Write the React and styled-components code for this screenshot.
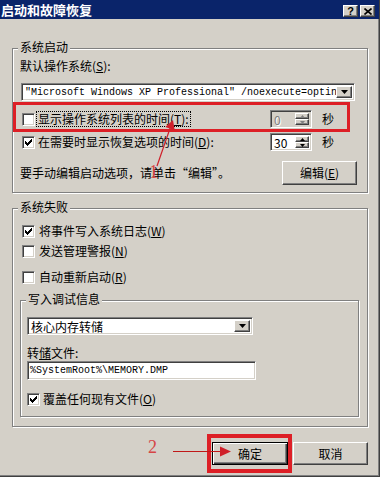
import React from "react";
import styled, { createGlobalStyle, css } from "styled-components";

const FACE = "#d4d0c8";
const SANS = `"Noto Sans CJK SC", "Noto Sans", sans-serif`;
const MONO = `"Liberation Mono", "Noto Sans CJK SC", monospace`;
const RED = "#dd1f26";

const Global = createGlobalStyle`
  html, body { margin: 0; padding: 0; background: ${FACE}; }
  body { font-family: ${SANS}; font-size: 12px; line-height: 14px; color: #000; }
  * { box-sizing: border-box; }
`;

const raised = css`
  background: ${FACE};
  border: 1px solid;
  border-color: #fff #404040 #404040 #fff;
  box-shadow: inset -1px -1px #808080;
`;

const sunken = css`
  border: 1px solid;
  border-color: #808080 #fff #fff #808080;
  box-shadow: inset 1px 1px #404040, inset -1px -1px ${FACE};
`;

const Window = styled.div`
  position: relative;
  width: 380px;
  height: 477px;
  background: ${FACE};
  border-right: 1px solid #404040;
  border-bottom: 1px solid #404040;
  box-shadow: inset -1px -1px #808080;
  display: flex;
  flex-direction: column;
  overflow: hidden;
`;

const TitleBar = styled.div`
  height: 19px;
  background: #0a246a;
  display: flex;
  align-items: flex-start;
  padding: 0 4px 0 1px;
`;

const TitleText = styled.div`
  color: #fff;
  font-weight: bold;
  font-size: 13px;
  line-height: 19px;
  flex: 1;
`;

const CaptionButton = styled.div`
  ${raised};
  width: 15px;
  height: 12px;
  margin-top: 5px;
  margin-left: ${(p) => p.$gap || 0}px;
  display: flex;
  align-items: center;
  justify-content: center;
  font-family: "Liberation Sans", sans-serif;
  font-weight: bold;
  font-size: 11px;
  line-height: 10px;
`;

const Body = styled.div`
  display: flex;
  flex-direction: column;
  padding: 0 11px 0 12px;
`;

const Group = styled.div`
  position: relative;
  border: 1px solid #808080;
  box-shadow: inset 1px 1px #fff, 1px 1px #fff;
  margin-top: ${(p) => p.$mt}px;
  margin-right: ${(p) => p.$mr || 0}px;
  padding: ${(p) => p.$pad};
  display: flex;
  flex-direction: column;
`;

const GroupTitle = styled.div`
  position: absolute;
  top: -9px;
  left: 5px;
  padding: 0 2px;
  background: ${FACE};
  line-height: 14px;
`;

const Label = styled.div`
  line-height: 14px;
  margin-top: ${(p) => p.$mt || 0}px;
  white-space: nowrap;
`;

const Combo = styled.div`
  ${sunken};
  background: #fff;
  width: ${(p) => p.$w}px;
  height: 18px;
  margin-top: ${(p) => p.$mt}px;
  margin-left: ${(p) => p.$ml || 0}px;
  display: flex;
  align-items: stretch;
  padding: 2px;
`;

const ComboText = styled.div`
  flex: 1;
  min-width: 0;
  white-space: nowrap;
  padding-left: 1px;
  line-height: 14px;
  ${(p) =>
    p.$mono
      ? css`
          overflow: hidden;
          font-family: ${MONO};
          font-size: 10px;
        `
      : css`
          font-family: ${SANS};
          font-size: 12px;
        `}
`;

const DropButton = styled.div`
  ${raised};
  width: 16px;
  flex: none;
  display: flex;
  align-items: center;
  justify-content: center;
`;

const TextField = styled.div`
  ${sunken};
  background: #fff;
  width: ${(p) => p.$w}px;
  height: 19px;
  margin-top: ${(p) => p.$mt}px;
  padding: 2px 0 0 2px;
  font-family: ${MONO};
  font-size: 10px;
  line-height: 14px;
  white-space: nowrap;
`;

const SpinGrid = styled.div`
  display: grid;
  grid-template-columns: 1fr 42px 12px;
  column-gap: 10px;
  align-items: center;
  margin-right: 33px;
  margin-top: ${(p) => p.$mt}px;
  height: 18px;
`;

const CheckRow = styled.div`
  display: flex;
  align-items: center;
  height: 16px;
  margin-top: ${(p) => p.$mt || 0}px;
  margin-left: ${(p) => p.$ml || 0}px;
`;

const Box = styled.div`
  ${sunken};
  background: #fff;
  width: 13px;
  height: 13px;
  flex: none;
  padding: 2px;
  display: flex;
  align-items: center;
  justify-content: center;
`;

const CheckLabel = styled.span`
  margin-left: ${(p) => p.$gap || 3}px;
  padding: 0 1px;
  line-height: 14px;
  white-space: nowrap;
  outline: ${(p) => (p.$focus ? "1px dotted #000" : "none")};
`;

const Spin = styled.div`
  ${sunken};
  background: ${(p) => (p.$disabled ? FACE : "#fff")};
  height: 18px;
  display: flex;
  padding: 2px;
`;

const SpinValue = styled.div`
  flex: 1;
  padding-left: 1px;
  line-height: 14px;
  color: ${(p) => (p.$disabled ? "#808080" : "#000")};
  text-shadow: ${(p) => (p.$disabled ? "1px 1px #fff" : "none")};
`;

const SpinArrows = styled.div`
  display: flex;
  flex-direction: column;
  width: 14px;
`;

const SpinArrow = styled.div`
  ${raised};
  flex: 1;
  display: flex;
  align-items: center;
  justify-content: center;
`;

const HintRow = styled.div`
  display: flex;
  align-items: center;
  justify-content: space-between;
  margin-top: 10px;
  padding-right: 10px;
`;

const PushButton = styled.button`
  ${raised};
  font-family: ${SANS};
  font-size: 12px;
  line-height: 14px;
  color: #000;
  width: ${(p) => p.$w}px;
  height: ${(p) => p.$h}px;
  padding: 0;
  ${(p) =>
    p.$default &&
    css`
      border: 1px solid #000;
      box-shadow: inset 1px 1px #fff, inset -1px -1px #404040, inset -2px -2px #808080;
    `}
`;

const ButtonRow = styled.div`
  display: flex;
  justify-content: flex-end;
  gap: 5px;
  margin-top: 15px;
`;

const RedFrame = styled.div`
  position: absolute;
  left: ${(p) => p.$x}px;
  top: ${(p) => p.$y}px;
  width: ${(p) => p.$w}px;
  height: ${(p) => p.$h}px;
  border: ${(p) => p.$t}px solid ${RED};
  pointer-events: none;
`;

const Marker = styled.div`
  position: absolute;
  left: ${(p) => p.$x}px;
  top: ${(p) => p.$y}px;
  font-family: "Liberation Serif", serif;
  font-size: 18px;
  line-height: 18px;
  color: #d64545;
`;

const Overlay = styled.svg`
  position: absolute;
  left: 0;
  top: 0;
  pointer-events: none;
`;

const Down = () => (
  <svg width="7" height="4" viewBox="0 0 7 4">
    <path d="M0 0h7L3.5 4z" fill="#000" />
  </svg>
);

const Tri = ({ up, color = "#000" }) => (
  <svg width="5" height="3" viewBox="0 0 5 3">
    <path d={up ? "M2.5 0L5 3H0z" : "M0 0h5L2.5 3z"} fill={color} />
  </svg>
);

const Check = () => (
  <svg width="7" height="7" viewBox="0 0 7 7" shapeRendering="crispEdges">
    <path
      d="M0 2h1v3H0z M1 3h1v3H1z M2 4h1v3H2z M3 3h1v3H3z M4 2h1v3H4z M5 1h1v3H5z M6 0h1v3H6z"
      fill="#000"
    />
  </svg>
);

const CheckBox = ({ checked }) => <Box>{checked && <Check />}</Box>;

const SpinBox = ({ value, disabled }) => (
  <Spin $disabled={disabled}>
    <SpinValue $disabled={disabled}>{value}</SpinValue>
    <SpinArrows>
      <SpinArrow>
        <Tri up color={disabled ? "#808080" : "#000"} />
      </SpinArrow>
      <SpinArrow>
        <Tri color={disabled ? "#808080" : "#000"} />
      </SpinArrow>
    </SpinArrows>
  </Spin>
);

export default function App() {
  return (
    <>
      <Global />
      <Window>
        <TitleBar>
          <TitleText>启动和故障恢复</TitleText>
          <CaptionButton>?</CaptionButton>
          <CaptionButton $gap={2}>
            <svg width="8" height="7" viewBox="0 0 8 7">
              <path d="M0.5 0.5L7.5 6.5M7.5 0.5L0.5 6.5" stroke="#000" strokeWidth="1.6" />
            </svg>
          </CaptionButton>
        </TitleBar>

        <Body>
          <Group $mt={29} $pad="10px 0 7px 7px">
            <GroupTitle>系统启动</GroupTitle>
            <Label>
              默认操作系统(<u>S</u>):
            </Label>
            <Combo $w={334} $mt={10} $ml={1}>
              <ComboText $mono>"Microsoft Windows XP Professional" /noexecute=optin</ComboText>
              <DropButton>
                <Down />
              </DropButton>
            </Combo>
            <SpinGrid $mt={9}>
              <CheckRow $ml={2}>
                <CheckBox />
                <CheckLabel $focus $gap={2}>
                  显示操作系统列表的时间(<u>T</u>):
                </CheckLabel>
              </CheckRow>
              <SpinBox value="0" disabled />
              <span>秒</span>
            </SpinGrid>
            <SpinGrid $mt={5}>
              <CheckRow $ml={2}>
                <CheckBox checked />
                <CheckLabel $gap={2}>
                  在需要时显示恢复选项的时间(<u>D</u>):
                </CheckLabel>
              </CheckRow>
              <SpinBox value="30" />
              <span>秒</span>
            </SpinGrid>
            <HintRow>
              <span>要手动编辑启动选项，请单击“编辑”。</span>
              <PushButton $w={75} $h={24}>
                编辑(<u>E</u>)
              </PushButton>
            </HintRow>
          </Group>

          <Group $mt={15} $pad="14px 0 9px 7px">
            <GroupTitle>系统失败</GroupTitle>
            <CheckRow $ml={2}>
              <CheckBox checked />
              <CheckLabel $gap={3}>
                将事件写入系统日志(<u>W</u>)
              </CheckLabel>
            </CheckRow>
            <CheckRow $ml={2} $mt={4}>
              <CheckBox />
              <CheckLabel $gap={3}>
                发送管理警报(<u>N</u>)
              </CheckLabel>
            </CheckRow>
            <CheckRow $ml={2} $mt={10}>
              <CheckBox />
              <CheckLabel $gap={3}>
                自动重新启动(<u>R</u>)
              </CheckLabel>
            </CheckRow>

            <Group $mt={15} $mr={8} $pad="16px 0 9px 6px">
              <GroupTitle>写入调试信息</GroupTitle>
              <Combo $w={226} $mt={0}>
                <ComboText>核心内存转储</ComboText>
                <DropButton>
                  <Down />
                </DropButton>
              </Combo>
              <Label $mt={11}>
                转<u>储</u>文件:
              </Label>
              <TextField $w={229} $mt={1}>
                %SystemRoot%\MEMORY.DMP
              </TextField>
              <CheckRow $mt={11}>
                <CheckBox checked />
                <CheckLabel $gap={2}>
                  覆盖任何现有文件(<u>O</u>)
                </CheckLabel>
              </CheckRow>
            </Group>
          </Group>

          <ButtonRow>
            <PushButton $w={76} $h={23} $default>
              确定
            </PushButton>
            <PushButton $w={75} $h={23}>
              取消
            </PushButton>
          </ButtonRow>
        </Body>

        <RedFrame $x={13} $y={102} $w={337} $h={30} $t={3} />
        <RedFrame $x={207} $y={434} $w={85} $h={39} $t={4} />
        <Marker $x={149} $y={163}>1</Marker>
        <Marker $x={148} $y={438}>2</Marker>
        <Overlay width="380" height="477" viewBox="0 0 380 477">
          <line x1="157" y1="166" x2="170.5" y2="127" stroke="#d0202a" strokeWidth="1.2" />
          <path d="M173 120L174.7 130.2L165.3 126.9z" fill="#d0202a" />
          <line x1="173" y1="451.5" x2="222" y2="451.5" stroke="#c01818" strokeWidth="1" />
          <path d="M231 451.5L220 446.5L220 456.5z" fill="#d0202a" />
        </Overlay>
      </Window>
    </>
  );
}
